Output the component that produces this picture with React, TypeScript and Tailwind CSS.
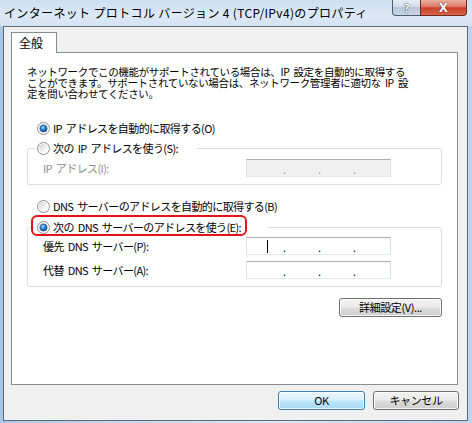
import React from 'react';

const jp = "font-['Noto_Sans_CJK_JP','Noto_Sans',sans-serif]";

function Radio({ checked }: { checked?: boolean }) {
  return (
    <svg width="13" height="13" viewBox="0 0 13 13" className="shrink-0">
      <defs>
        <linearGradient id="rbg" x1="0" y1="0" x2="1" y2="1">
          <stop offset="0" stopColor="#cfcfcf" />
          <stop offset="0.6" stopColor="#f4f4f4" />
          <stop offset="1" stopColor="#ffffff" />
        </linearGradient>
        <radialGradient id="rdot" cx="40%" cy="35%" r="70%">
          <stop offset="0" stopColor="#9ddcff" />
          <stop offset="0.45" stopColor="#2f86d6" />
          <stop offset="1" stopColor="#123f76" />
        </radialGradient>
      </defs>
      <circle cx="6.5" cy="6.5" r="6" fill="#ffffff" stroke="#8e8f8f" />
      <circle cx="6.5" cy="6.5" r="4.5" fill="url(#rbg)" />
      {checked && <circle cx="6.5" cy="6.5" r="3.6" fill="url(#rdot)" stroke="#1b4f86" strokeWidth="0.6" />}
    </svg>
  );
}

function IpBox({ disabled, caret }: { disabled?: boolean; caret?: boolean }) {
  const dot = disabled ? 'text-[#8d8d8d]' : 'text-black';
  return (
    <div
      className={`relative flex items-end h-[18px] w-[145px] border border-[#abadb3] border-l-[#e2e3ea] border-r-[#dbdfe6] border-b-[#e3e9ef] ${
        disabled ? 'bg-[#f0f0f0]' : 'bg-white'
      }`}
    >
      <span className="w-[36px]" />
      <span className={`w-[35px] leading-[14px] text-[11px] ${dot}`}>.</span>
      <span className={`w-[35px] leading-[14px] text-[11px] ${dot}`}>.</span>
      <span className={`w-[10px] leading-[14px] text-[11px] ${dot}`}>.</span>
      {caret && <div className="absolute left-[20px] top-[2px] w-[1px] h-[13px] bg-black" />}
    </div>
  );
}

function WinButton({ children, primary, w }: { children: React.ReactNode; primary?: boolean; w: string }) {
  return (
    <div
      className={`${w} h-[19px] rounded-[3px] border flex items-center justify-center text-[11px] tracking-[-0.4px] text-black shadow-[inset_0_0_0_1px_rgba(255,255,255,0.8)] ${
        primary
          ? 'border-[#3c7fb1] bg-[linear-gradient(#eaf6fd_0%,#d9f0fc_48%,#bee6fd_52%,#a7d9f5_100%)]'
          : 'border-[#707070] bg-[linear-gradient(#f2f2f2_0%,#ebebeb_48%,#dddddd_52%,#cfcfcf_100%)]'
      }`}
    >
      {children}
    </div>
  );
}

export default function App() {
  return (
    <div className={`${jp} w-[472px] h-[423px] overflow-hidden flex flex-col bg-[linear-gradient(90deg,#a9c6e6_0%,#c8dcf1_30%,#d9e7f6_60%,#bcd4ee_100%)]`}>
      {/* タイトルバー */}
      <div className="h-[26px] flex items-start shrink-0 bg-[linear-gradient(#cddff2_0%,#dce9f6_60%,#d3e3f4_100%)]">
        <div className="pl-[4px] pt-[5px] text-[12px] leading-[16px] tracking-[0.35px] text-black whitespace-nowrap">
          インターネット プロトコル バージョン 4 (TCP/IPv4)のプロパティ
        </div>
        <div className="ml-auto mr-[5px] flex">
          <div className="w-[28px] h-[16px] rounded-bl-[4px] border border-t-0 border-r-0 border-[#4b5d73] bg-[linear-gradient(#e6edf5_0%,#d3dde9_45%,#b7c6d8_50%,#c9d6e4_100%)] flex items-center justify-center">
            <span className="text-[12px] leading-[12px] font-bold text-white [text-shadow:0_0_1px_#2d3e52,0_0_1px_#2d3e52]">?</span>
          </div>
          <div className="w-[47px] h-[16px] rounded-br-[4px] border border-t-0 border-[#6b2a22] bg-[linear-gradient(#eab0a2_0%,#dd7a66_45%,#c9412a_52%,#d8664a_100%)] flex items-center justify-center">
            <span className="text-[12px] leading-[12px] font-bold text-white font-['DejaVu_Sans',sans-serif] [text-shadow:0_0_1px_#4a1a12,0_0_1px_#4a1a12]">X</span>
          </div>
        </div>
      </div>

      {/* クライアント領域 */}
      <div className="ml-[3px] w-[465px] h-[395px] border border-[#5f6b78] bg-[#f0f0f0] flex flex-col">
        <div className="ml-[7px] mt-[5px] flex">
          <div className="relative z-10 -mb-[1px] w-[46px] h-[21px] border border-b-0 border-[#898c95] bg-white text-[12px] leading-[20px] pl-[7px] text-black">
            全般
          </div>
        </div>
        <div className="ml-[7px] w-[447px] h-[333px] border border-[#898c95] bg-white px-[15px] flex flex-col text-[11px] text-black tracking-[-0.6px] [word-spacing:2px]">
          <p className="mt-[13px] text-[10.5px] leading-[11px] tracking-[-0.35px] whitespace-nowrap">
            ネットワークでこの機能がサポートされている場合は、IP 設定を自動的に取得する
            <br />
            ことができます。サポートされていない場合は、ネットワーク管理者に適切な IP 設
            <br />
            定を問い合わせてください。
          </p>

          <div className="mt-[22px] h-[14px] flex items-center pl-[10px] gap-[3px]">
            <Radio checked />
            <span className="leading-[14px]">IP アドレスを自動的に取得する(O)</span>
          </div>

          <div className="mt-[13px] h-[37px] border border-[#d5dfe5] rounded-[3px] flex flex-col">
            <div className="-mt-[8px] ml-[7px] w-[162px] h-[14px] bg-white flex items-center gap-[3px] pl-[2px]">
              <Radio />
              <span className="leading-[14px]">次の IP アドレスを使う(S):</span>
            </div>
            <div className="mt-[4px] flex items-center justify-between pl-[15px] pr-[50px]">
              <span className="text-[#8d8d8d]">IP アドレス(I):</span>
              <IpBox disabled />
            </div>
          </div>

          <div className="mt-[14px] h-[14px] flex items-center pl-[10px] gap-[3px]">
            <Radio />
            <span className="leading-[14px]">DNS サーバーのアドレスを自動的に取得する(B)</span>
          </div>

          <div className="relative mt-[14px] h-[60px] border border-[#d5dfe5] rounded-[3px] flex flex-col">
            <div className="-mt-[8px] ml-[7px] w-[232px] h-[14px] bg-white flex items-center gap-[3px] pl-[2px]">
              <Radio checked />
              <span className="leading-[14px]">次の DNS サーバーのアドレスを使う(E):</span>
            </div>
            <div className="absolute left-[3px] -top-[13px] w-[216px] h-[21px] border-2 border-[#e0141a] rounded-[6px]" />
            <div className="mt-[3px] flex items-center justify-between pl-[15px] pr-[50px]">
              <span>優先 DNS サーバー(P):</span>
              <IpBox caret />
            </div>
            <div className="mt-[6px] flex items-center justify-between pl-[15px] pr-[50px]">
              <span>代替 DNS サーバー(A):</span>
              <IpBox />
            </div>
          </div>

          <div className="mt-[11px] flex justify-end">
            <WinButton w="w-[103px]">詳細設定(V)...</WinButton>
          </div>
        </div>

        <div className="mt-[6px] flex justify-end gap-[8px] pr-[8px]">
          <WinButton primary w="w-[87px]">OK</WinButton>
          <WinButton w="w-[86px]">キャンセル</WinButton>
        </div>
      </div>
    </div>
  );
}
